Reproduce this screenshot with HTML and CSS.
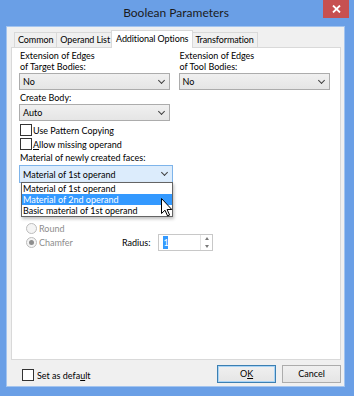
FILE: index.html
```
<!DOCTYPE html>
<html lang="en">

<head>
    <meta charset="UTF-8">
    <title>Boolean Parameters</title>
    <link rel="stylesheet" href="styles.css">
</head>

<body>
    <div class="window">
        <div class="titlebar">
            <span class="title">Boolean Parameters</span>
            <div class="close-btn">
                <svg width="9" height="8" viewBox="0 0 9 8">
                    <path d="M1 0.5 L8 7.5 M8 0.5 L1 7.5" stroke="#fff" stroke-width="1.8" />
                </svg>
            </div>
        </div>
        <div class="client">
            <div class="tabs">
                <div class="tab">Common</div>
                <div class="tab">Operand List</div>
                <div class="tab active">Additional Options</div>
                <div class="tab">Transformation</div>
            </div>
            <div class="panel">
                <div class="columns">
                    <div class="col">
                        <div class="label">Extension of Edges<br>of Target Bodies:</div>
                        <div class="combo"><span>No</span><span class="arrow"></span></div>
                        <div class="label">Create Body:</div>
                        <div class="combo"><span>Auto</span><span class="arrow"></span></div>
                    </div>
                    <div class="col right">
                        <div class="label">Extension of Edges<br>of Tool Bodies:</div>
                        <div class="combo"><span>No</span><span class="arrow"></span></div>
                    </div>
                </div>
                <div class="checks">
                    <label class="check"><span class="box"></span>Use Pattern Copying</label>
                    <label class="check"><span class="box"></span><span><u>A</u>llow missing operand</span></label>
                </div>
                <div class="label single">Material of newly created faces:</div>
                <div class="combo-wrap">
                    <div class="combo focused"><span>Material of 1st operand</span><span class="arrow"></span></div>
                    <div class="droplist">
                        <div class="item">Material of 1st operand</div>
                        <div class="item selected">Material of 2nd operand</div>
                        <div class="item">Basic material of 1st operand</div>
                    </div>
                    <svg class="cursor" width="12" height="19" viewBox="0 0 12 19">
                        <path d="M0.5 0.5 L0.5 15.5 L4 12.2 L6.6 18 L8.6 17.1 L6.1 11.5 L10.8 11.5 Z" fill="#fff" stroke="#000" stroke-width="1" />
                    </svg>
                </div>
                <div class="edge-row">
                    <div class="radios">
                        <div class="radio"><span class="dot"></span>Round</div>
                        <div class="radio checked"><span class="dot"></span>Chamfer</div>
                    </div>
                    <div class="radius">
                        <span>Radius:</span>
                        <div class="spin">
                            <span class="spin-text"><span class="sel">1</span></span>
                            <span class="spin-btns">
                                <span class="up"></span>
                                <span class="down"></span>
                            </span>
                        </div>
                    </div>
                </div>
            </div>
            <div class="footer">
                <label class="check"><span class="box"></span><span>Set as defa<u>u</u>lt</span></label>
                <div class="buttons">
                    <div class="btn default">O<u>K</u></div>
                    <div class="btn">Cancel</div>
                </div>
            </div>
        </div>
    </div>
</body>

</html>
```

FILE: styles.css
```
* {
    margin: 0;
    padding: 0;
    box-sizing: border-box;
}

body {
    width: 354px;
    height: 396px;
    overflow: hidden;
    font-family: Lato, 'Noto Sans', sans-serif;
    font-size: 9px;
    color: #000;
}

.window {
    width: 354px;
    height: 396px;
    background: #6a9fe6;
    padding: 0 9px 9px 6px;
    display: flex;
    flex-direction: column;
}

.titlebar {
    height: 26px;
    position: relative;
    display: flex;
    justify-content: center;
    padding-top: 4px;
}

.title {
    font-size: 12px;
    line-height: 18px;
    color: #1b1b1b;
    padding-left: 1px;
}

.close-btn {
    position: absolute;
    right: -4px;
    top: 0;
    width: 26px;
    height: 18px;
    background: #c75050;
    display: flex;
    align-items: center;
    justify-content: center;
}

.client {
    flex: 1;
    background: #f0f0f0;
    border: 1px solid #a3c4ef;
    padding: 3px 3px 0 4px;
    display: flex;
    flex-direction: column;
}

/* tab strip */
.tabs {
    display: flex;
    align-items: flex-end;
    padding-left: 3px;
    height: 17px;
    position: relative;
    z-index: 2;
}

.tab {
    height: 15px;
    border: 1px solid #d9d9d9;
    border-bottom: none;
    background: #f0f0f0;
    padding: 0 3px;
    line-height: 14px;
    margin-right: -1px;
    letter-spacing: -0.1px;
}

.tab.active {
    height: 18px;
    background: #fff;
    padding: 0 4px;
    margin: 0 -2px -1px -2px;
    line-height: 15px;
    position: relative;
    z-index: 3;
}

.panel {
    background: #fff;
    border: 1px solid #d9d9d9;
    height: 313px;
    padding: 2px 10px 0 7px;
    position: relative;
}

.columns {
    display: flex;
    gap: 9px;
}

.col {
    width: 151px;
}

.col.right {
    width: 152px;
}

.label {
    line-height: 11px;
    padding-left: 1px;
    margin-bottom: 1px;
    white-space: nowrap;
}

.label.single {
    line-height: 14px;
    margin-bottom: 0;
}

.combo {
    height: 17px;
    border: 1px solid #acacac;
    background: linear-gradient(#f0f0f0, #e5e5e5);
    display: flex;
    align-items: center;
    justify-content: space-between;
    padding: 0 5px 0 3px;
    margin-bottom: 2px;
}

.combo.focused {
    height: 18px;
    background: #dcecfc;
    border-color: #7eb4ea;
    width: 154px;
    margin-bottom: 0;
}

.arrow {
    width: 5px;
    height: 5px;
    border-right: 1px solid #404040;
    border-bottom: 1px solid #404040;
    transform: rotate(45deg);
    margin-top: -3px;
}

.check {
    display: flex;
    align-items: center;
    gap: 1px;
    height: 14px;
    margin-left: 1px;
}

.box {
    width: 12px;
    height: 12px;
    border: 1px solid #333;
    background: #fff;
}

.combo-wrap {
    position: relative;
}

.droplist {
    position: absolute;
    left: 2px;
    top: 17px;
    width: 152px;
    border: 1px solid #646464;
    background: #fff;
    box-shadow: 1px 2px 3px rgba(0, 0, 0, 0.25);
    z-index: 5;
}

.item {
    height: 11px;
    line-height: 11px;
    padding-left: 1px;
    white-space: nowrap;
}

.item.selected {
    background: #3399ff;
    color: #fff;
}

.cursor {
    position: absolute;
    left: 142px;
    top: 33px;
    z-index: 6;
}

.edge-row {
    display: flex;
    margin-top: 38px;
    padding-left: 7px;
}

.radios {
    width: 96px;
}

.radio {
    display: flex;
    align-items: center;
    gap: 2px;
    height: 14px;
    color: #8d8d8d;
}

.dot {
    width: 11px;
    height: 11px;
    border-radius: 50%;
    border: 1px solid #bcbcbc;
    background: #f4f4f4;
    display: flex;
    align-items: center;
    justify-content: center;
}

.radio.checked .dot::after {
    content: '';
    width: 5px;
    height: 5px;
    border-radius: 50%;
    background: #8d8d8d;
}

.radius {
    display: flex;
    align-items: center;
    gap: 8px;
    align-self: flex-end;
    margin-bottom: -2px;
}

.spin {
    width: 55px;
    height: 17px;
    border: 1px solid #c8c8c8;
    display: flex;
    background: #fff;
}

.spin-text {
    flex: 1;
    padding: 1px 0 0 4px;
}

.sel {
    background: #3399ff;
    color: #fff;
    display: inline-block;
    width: 5px;
    height: 13px;
    line-height: 13px;
}

.spin-btns {
    width: 12px;
    display: flex;
    flex-direction: column;
    border-left: 1px solid #e3e3e3;
}

.up,
.down {
    flex: 1;
    display: flex;
    align-items: center;
    justify-content: center;
}

.up::after {
    content: '';
    border: 2px solid transparent;
    border-bottom: 3px solid #7a7a7a;
    margin-top: -3px;
}

.down::after {
    content: '';
    border: 2px solid transparent;
    border-top: 3px solid #7a7a7a;
    margin-bottom: -3px;
}

/* bottom bar */
.footer {
    flex: 1;
    display: flex;
    align-items: center;
    justify-content: space-between;
    padding: 0 0 0 10px;
}

.footer .check {
    margin-top: 4px;
    gap: 3px;
}

.buttons {
    display: flex;
    gap: 6px;
    margin-top: 1px;
}

.btn {
    width: 59px;
    height: 18px;
    border: 1px solid #acacac;
    background: linear-gradient(#f0f0f0, #e5e5e5);
    text-align: center;
    line-height: 16px;
}

.btn.default {
    border-color: #3c7fb1;
    box-shadow: inset 0 0 0 1px #a9d4f6;
}
```
